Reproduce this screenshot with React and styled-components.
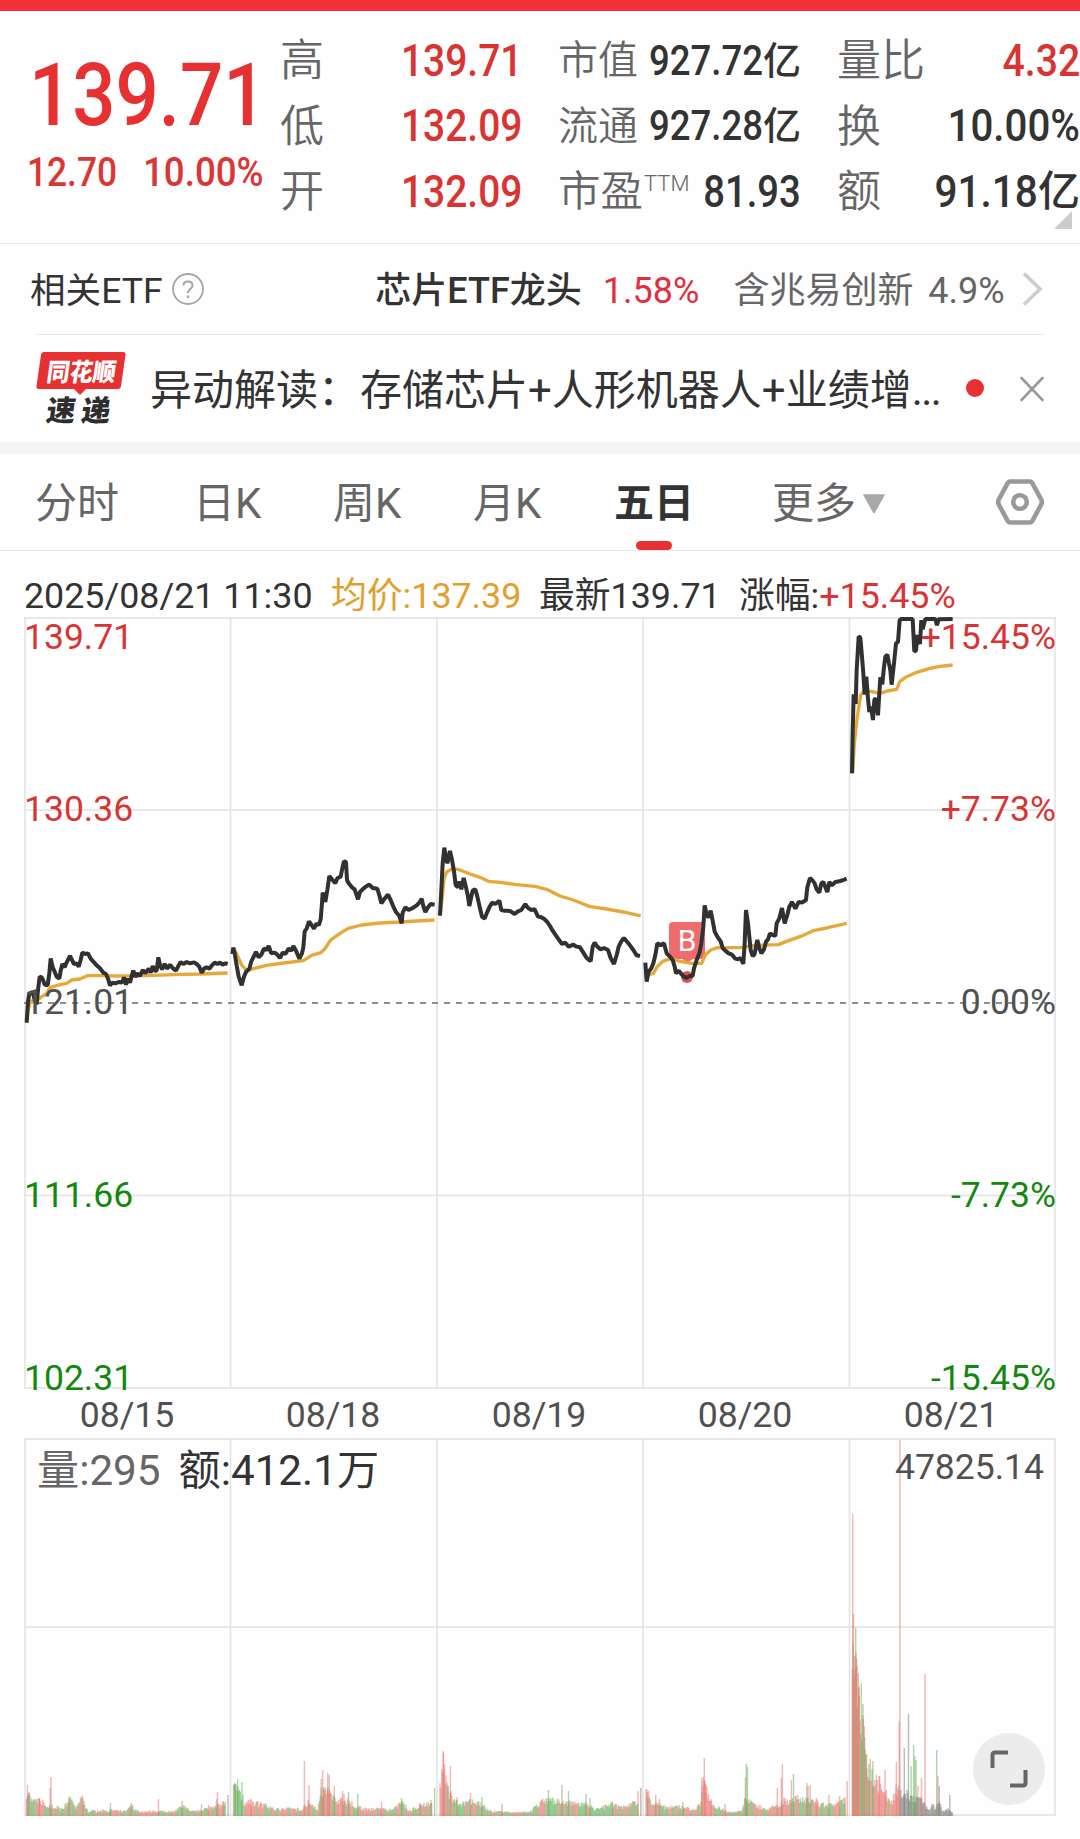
import React from "react";
import styled, { createGlobalStyle } from "styled-components";

const INK = "#333333";
const GREY = "#666666";
const RED = "#d93434";
const GREEN = "#12880f";
const LINE = "#e8e8e8";

const Global = createGlobalStyle`
  * { box-sizing: border-box; }
  body {
    margin: 0;
    background: #fefefe;
    color: ${INK};
    font-family: Roboto, "Noto Sans CJK SC", sans-serif;
    -webkit-font-smoothing: antialiased;
  }
`;

const Page = styled.main`
  width: 1080px;
  height: 1839px;
  overflow: hidden;
  display: flex;
  flex-direction: column;
`;

const TopBar = styled.div`
  height: 11px;
  flex: none;
  background: #f33038;
`;

/* ---------- quote ---------- */

const Quote = styled.section`
  position: relative;
  height: 233px;
  flex: none;
  padding-top: 17px;
  border-bottom: 1px solid ${LINE};
  display: grid;
  grid-template-columns: 280px 244px 242px 243px;
  column-gap: 0;
  justify-content: start;
`;

const Fit = styled.span`
  display: inline-block;
  white-space: nowrap;
  transform: scaleX(${(p) => p.$sx || 0.86});
  transform-origin: ${(p) => p.$from || "left"} center;
  margin-left: ${(p) => (p.$from === "right" ? -20 : 0)}px;
`;

const PriceBlock = styled.div`
  display: flex;
  flex-direction: column;
  padding-left: 29px;
  color: #e73032;
`;

const Price = styled.div`
  height: 94px;
  margin-top: 20px;
  font-size: 87px;
  line-height: 94px;
  font-weight: 550;
`;

const Change = styled.div`
  display: flex;
  margin-top: 6px;
  font-size: 41px;
  line-height: 48px;
  font-weight: 500;
  color: #d93636;
  span:first-child { width: 116px; }
  margin-left: -2px;
`;

const StatColumn = styled.div`
  display: flex;
  flex-direction: column;
  margin-left: ${(p) => p.$shift || 0}px;
  width: ${(p) => p.$w}px;
`;

const Stat = styled.div`
  height: 65.5px;
  display: flex;
  align-items: center;
  justify-content: space-between;
  white-space: nowrap;
`;

const Label = styled.span`
  font-size: ${(p) => p.$size || 44}px;
  line-height: 60px;
  font-weight: 350;
  color: ${GREY};
  display: flex;
  padding-top: 1px;
`;

const Sup = styled.sup`
  font-size: 22px;
  line-height: 23px;
  font-weight: 300;
  margin: 10px 0 0 1px;
`;

const Value = styled.span`
  display: flex;
  align-items: center;
  font-size: ${(p) => p.$size || 45}px;
  line-height: 60px;
  font-weight: 500;
  color: ${(p) => (p.$red ? RED : INK)};
  width: ${(p) => (p.$w ? p.$w + "px" : "auto")};
  justify-content: ${(p) => (p.$left ? "flex-start" : "flex-end")};
`;

const Unit = styled.span`
  font-size: ${(p) => p.$size || 40}px;
  font-weight: 500;
`;

const Corner = styled.svg`
  position: absolute;
  right: 8px;
  top: 200px;
`;

/* ---------- ETF ---------- */

const EtfRow = styled.section`
  height: 91px;
  flex: none;
  margin: 0 36px;
  border-bottom: 1px solid ${LINE};
  display: flex;
  align-items: center;
  font-size: 36px;
  line-height: 48px;
  white-space: nowrap;
`;

const EtfTitle = styled.div`
  display: flex;
  align-items: center;
  gap: 8px;
  width: 346px;
  margin-left: -6px;
  font-size: 35.6px;
`;

const EtfText = styled.span`
  width: ${(p) => p.$w}px;
  padding-top: 3px;
  font-weight: ${(p) => (p.$bold ? 500 : 400)};
  color: ${(p) => p.$color || INK};
`;

/* ---------- news ---------- */

const NewsRow = styled.section`
  height: 107px;
  flex: none;
  padding: 0 36px;
  display: flex;
  align-items: center;
`;

const Logo = styled.svg`
  flex: none;
  margin-top: -2px;
  overflow: visible;
`;

const Headline = styled.span`
  width: 816px;
  margin-left: 22px;
  padding-top: 4px;
  font-size: 42px;
  line-height: 60px;
  white-space: nowrap;
`;

const Ellipsis = styled.span`
  letter-spacing: -1.5px;
`;

const Dot = styled.i`
  width: 18px;
  height: 18px;
  border-radius: 50%;
  background: #e73032;
  margin: -1px 36px 0 0;
  flex: none;
`;

const Band = styled.div`
  height: 12px;
  flex: none;
  background: #f4f4f4;
`;

/* ---------- tabs ---------- */

const Tabs = styled.nav`
  height: 97px;
  flex: none;
  border-bottom: 1px solid ${LINE};
  display: flex;
  align-items: stretch;
  padding: 0 35px;
`;

const Tab = styled.div`
  display: flex;
  flex-direction: column;
  align-items: flex-start;
  justify-content: space-between;
  width: ${(p) => p.$w}px;
  padding-top: 20px;
  font-size: ${(p) => (p.$active ? 40 : 42)}px;
  line-height: 60px;
  color: ${(p) => (p.$active ? INK : GREY)};
  font-weight: ${(p) => (p.$active ? 700 : 400)};
  white-space: nowrap;
`;

const TabText = styled.span`
  display: flex;
  align-items: center;
  gap: 6px;
`;

const Underline = styled.i`
  width: 36px;
  height: 9px;
  margin-left: 22px;
  border-radius: 5px;
  background: #e73032;
`;

const SettingsIcon = styled.svg`
  align-self: center;
`;

/* ---------- chart ---------- */

const Legend = styled.div`
  height: 66px;
  flex: none;
  display: flex;
  padding: 20px 0 0 24px;
  font-size: 35.8px;
  line-height: 50px;
  white-space: nowrap;
`;

const LegendItem = styled.span`
  width: ${(p) => p.$w}px;
  color: ${(p) => p.$color || INK};
`;

const Accent = styled.span`
  color: ${RED};
`;

const Panel = styled.section`
  position: relative;
  height: ${(p) => p.$h}px;
  flex: none;
  svg { display: block; }
`;

const Axis = styled.span`
  position: absolute;
  top: ${(p) => p.$y}px;
  ${(p) => (p.$right ? "right: 24px;" : "left: 24px;")}
  font-size: 35.5px;
  line-height: 40px;
  color: ${(p) => p.$color};
`;

const Dates = styled.div`
  height: 49px;
  flex: none;
  display: grid;
  grid-template-columns: repeat(5, 206px);
  padding-left: 24px;
  text-align: center;
  font-size: 35.6px;
  line-height: 52px;
  color: #505050;
`;

const VolumeLegend = styled.div`
  position: absolute;
  left: 37px;
  top: 8px;
  display: flex;
  gap: 18px;
  font-size: 42.2px;
  line-height: 50px;
`;

const VolumeText = styled.span`
  color: ${(p) => (p.$dim ? GREY : INK)};
`;

const VolumeMax = styled.span`
  position: absolute;
  right: 36px;
  top: 9px;
  font-size: 35.5px;
  line-height: 40px;
  color: #505050;
`;

const Expand = styled.button`
  position: absolute;
  left: 973px;
  top: 295px;
  width: 72px;
  height: 72px;
  border: 0;
  padding: 0;
  border-radius: 50%;
  background: #ececec;
  display: grid;
  place-items: center;
`;

/* Points are stored in thirds of a pixel; dx, dy shift a session on the canvas. */
const SESSIONS = [
  {
    dx: 0, dy: 0,
    price: "80,1388 84,1325 88,1300 98,1296 104,1320 110,1333 114,1290 119,1250 125,1252 130,1262 134,1274 143,1276 148,1240 152,1195 158,1222 164,1235 170,1250 178,1256 182,1232 187,1212 194,1222 200,1207 210,1188 216,1200 222,1212 230,1210 236,1220 242,1200 247,1178 256,1182 264,1180 272,1196 280,1205 290,1216 300,1225 310,1238 318,1242 324,1256 330,1276 338,1268 346,1270 356,1266 366,1268 372,1252 378,1274 384,1256 390,1268 396,1244 400,1232 406,1250 414,1240 420,1248 428,1230 436,1240 446,1226 452,1238 458,1218 464,1232 470,1232 475,1192 480,1215 486,1228 494,1212 502,1226 510,1214 520,1226 528,1232 536,1216 542,1206 550,1212 560,1206 570,1210 582,1207 590,1212 598,1220 605,1238 612,1226 620,1222 628,1226 636,1216 644,1208 652,1212 660,1208 668,1214 676,1210 683,1212",
    avg: "80,1388 84,1350 92,1322 104,1328 120,1314 140,1300 150,1283 175,1275 200,1270 215,1260 240,1257 262,1247 310,1247 350,1248 440,1247 520,1244 600,1242 683,1239",
  },
  {
    dx: 0, dy: 0,
    price: "697,1182 700,1163 704,1180 710,1216 716,1250 725,1276 732,1250 738,1236 748,1226 754,1204 760,1192 768,1176 776,1192 784,1184 792,1166 800,1170 806,1158 814,1180 824,1178 832,1184 840,1194 848,1178 856,1182 866,1166 874,1172 880,1158 888,1172 898,1196 906,1180 910,1162 914,1114 920,1106 927,1084 934,1094 942,1106 950,1090 956,1096 962,1078 966,1030 968,998 976,1026 982,990 988,948 996,958 1006,970 1012,955 1022,950 1028,920 1032,904 1038,906 1041,960 1046,970 1056,982 1064,988 1074,1018 1080,996 1090,986 1100,978 1108,974 1118,984 1132,986 1138,1006 1144,1030 1152,1018 1164,1004 1172,1020 1180,1040 1188,1056 1198,1068 1205,1090 1208,1058 1216,1042 1226,1050 1238,1044 1250,1036 1258,1028 1265,1016 1270,1038 1276,1056 1284,1042 1292,1032 1304,1034",
    avg: "700,1163 712,1186 725,1215 740,1232 760,1226 800,1216 850,1209 910,1202 935,1186 962,1178 975,1166 992,1140 1020,1120 1045,1105 1085,1095 1140,1089 1200,1086 1250,1083 1304,1080",
  },
  {
    dx: 1260, dy: 720,
    price: "60,347 64,270 68,190 73,143 78,175 82,190 90,153 96,180 102,214 107,255 114,262 118,244 124,268 131,234 138,262 144,290 148,318 154,290 158,272 166,268 172,290 180,325 186,350 194,356 200,340 208,322 216,308 226,312 238,302 244,330 252,332 262,332 272,334 284,342 294,334 304,330 316,312 324,324 334,330 344,328 354,350 364,352 374,358 382,366 390,378 398,392 406,404 416,418 426,432 436,428 446,440 460,434 470,440 480,442 490,458 500,474 512,484 518,440 524,428 532,440 542,448 552,444 564,450 572,474 582,492 590,465 596,440 604,424 612,414 620,424 630,436 640,450 650,466 660,468",
    avg: "60,347 66,300 72,235 80,216 100,205 120,210 150,222 180,232 205,244 240,247 290,254 345,259 380,268 420,288 460,300 510,320 560,327 610,336 662,348",
  },
  {
    dx: 1260, dy: 720,
    price: "676,488 680,545 686,515 694,505 700,490 706,465 712,430 722,436 732,430 740,460 750,470 758,480 764,500 768,520 776,512 784,522 792,530 800,534 808,528 818,528 822,505 830,480 838,460 844,430 850,380 854,316 860,345 866,352 872,332 878,362 884,395 892,410 902,424 908,444 916,452 926,460 936,464 946,476 954,478 962,474 970,492 974,430 978,330 984,370 988,410 992,450 998,468 1004,462 1008,440 1012,420 1018,445 1024,460 1032,448 1038,425 1044,418 1050,400 1058,405 1066,408 1070,370 1078,355 1086,324 1094,370 1102,345 1108,320 1116,306 1126,326 1136,306 1146,308 1158,300 1162,262 1170,234 1178,242 1184,250 1190,268 1198,278 1204,250 1210,246 1222,276 1228,246 1236,256 1246,246 1258,244 1270,240 1280,236",
    avg: "684,525 700,520 712,500 728,484 752,476 780,484 815,490 845,490 856,465 872,450 892,443 965,443 1000,436 1075,434 1100,424 1150,406 1180,392 1220,384 1280,370",
  },
  {
    dx: 2100, dy: 0,
    price: "456,640 458,520 461,403 467,432 470,330 476,230 481,232 486,290 490,340 494,404 499,350 504,415 508,456 513,440 519,480 523,420 527,415 534,466 538,400 541,352 547,373 551,330 556,290 562,284 567,310 571,330 575,374 582,310 588,250 594,246 599,180 603,177 638,177 643,274 648,272 652,225 656,240 660,252 664,180 668,208 676,177 706,177 711,196 716,178 758,177",
    avg: "458,640 463,550 472,470 482,405 492,392 512,394 540,400 562,393 590,388 600,364 620,350 650,337 690,325 720,319 758,315",
  },
];

/* Volume: env holds [x, height] knots, peaks hold [x, height, colour], tone is the share of rising minutes. */
const VOLUMES = [
  {
    from: 26.5, to: 226, tone: 0.5,
    env: [[26, 22], [29, 18], [33, 12], [43, 13], [48, 7], [54, 9], [60, 6], [66, 9], [70, 16], [75, 6], [82, 15], [88, 4], [110, 5], [125, 4], [132, 8], [138, 4], [175, 4], [183, 9], [190, 4], [200, 5], [210, 7], [226, 11]],
    peaks: [[27.5, 31, "r"], [29, 24, "r"], [39.5, 18, "r"], [50.2, 28, "r"], [51, 39, "r"], [69, 19, "r"], [82.8, 18, "r"], [110.5, 13, "g"], [131, 13, "g"], [158.5, 17, "r"], [182, 15, "r"], [201.5, 12, "g"], [208.5, 11, "r"], [216.5, 17, "r"], [217.5, 24, "r"], [223.5, 15, "r"], [228, 21, "k"]],
  },
  {
    from: 244, to: 432, tone: 0.6,
    env: [[244, 12], [262, 10], [275, 6], [300, 6], [302, 5], [306, 11], [310, 12], [314, 8], [318, 6], [321, 20], [330, 22], [335, 14], [350, 12], [362, 6], [380, 6], [390, 5], [402, 11], [410, 5], [424, 10], [432, 12]],
    peaks: [[251, 17, "r"], [304.4, 55, "r"], [309, 31, "r"], [321.2, 37, "r"], [322.7, 46, "r"], [323.6, 29, "g"], [327.8, 43, "r"], [329.3, 41, "r"], [334.3, 30, "r"], [342.6, 25, "r"], [344, 22, "r"], [348.5, 24, "g"], [357.8, 22, "g"], [381.5, 14, "r"], [401.5, 18, "g"], [420, 13, "r"], [431, 16, "g"], [434.6, 28, "g"]],
  },
  {
    from: 233.5, to: 243.5, tone: 0.05,
    env: [[233, 28], [238, 30], [239.5, 22], [241, 15], [243.5, 18]],
    peaks: [[235, 33, "g"], [237.6, 37, "g"], [242, 34, "g"]],
  },
  {
    from: 440, to: 447, tone: 1,
    env: [[440, 28], [443, 46], [447, 24]],
    peaks: [[443.2, 65, "r"], [444.5, 52, "r"], [450.4, 50, "r"]],
  },
  {
    from: 447.5, to: 638.5, tone: 0.44,
    env: [[447, 24], [452, 17], [460, 11], [475, 12], [484, 8], [492, 4], [515, 3], [530, 4], [540, 11], [549, 14], [556, 12], [570, 11], [590, 10], [594, 5], [612, 10], [620, 7], [636, 12]],
    peaks: [[457, 19, "r"], [470.5, 23, "r"], [482, 19, "g"], [502, 12, "g"], [548.5, 26, "g"], [562, 31, "g"], [568.5, 25, "g"], [586, 22, "g"], [590, 18, "g"], [612.5, 14, "g"], [638, 25, "r"], [640.8, 28, "k"]],
  },
  {
    from: 646, to: 845, tone: 0.58,
    env: [[646, 22], [652, 12], [668, 7], [680, 8], [695, 5], [700, 10], [704, 30], [710, 13], [715, 8], [730, 3], [742, 4], [746, 18], [750, 11], [765, 6], [775, 8], [785, 13], [800, 15], [812, 13], [825, 9], [845, 13]],
    peaks: [[647.5, 24, "r"], [655.7, 21, "r"], [659.5, 17, "r"], [683, 14, "g"], [701.8, 38, "r"], [704.3, 58, "r"], [705.8, 32, "r"], [711, 15, "r"], [725, 12, "r"], [745.4, 38, "r"], [746.3, 52, "g"], [747.5, 49, "g"], [777.3, 28, "r"], [781.4, 38, "r"], [782.4, 52, "r"], [791.4, 36, "r"], [793.5, 42, "g"], [806.9, 33, "r"], [808, 30, "g"], [810.2, 31, "r"], [816.5, 18, "r"], [829, 21, "r"], [839.6, 20, "r"], [845, 19, "r"], [847.2, 35, "r"]],
  },
  {
    from: 852.3, to: 901, tone: 0.65,
    env: [[852, 140], [857, 135], [859, 96], [861, 90], [863, 74], [866, 50], [870, 40], [875, 30], [880, 28], [885, 20], [892, 12], [896, 24], [901, 22]],
    peaks: [[852.7, 302, "r"], [853.5, 202, "r"], [854.7, 160, "r"], [856, 163, "r"], [857, 150, "r"], [858.5, 128, "r"], [859.3, 120, "r"], [861.3, 133, "g"], [863, 112, "g"], [864.6, 79, "g"], [866.5, 62, "g"], [869, 52, "g"], [872.9, 55, "g"], [879, 40, "r"], [885, 46, "r"], [896.4, 54, "r"], [899.2, 95, "r"], [899.9, 376, "r"]],
  },
  {
    from: 901, to: 953, tone: -1,
    env: [[901, 18], [905, 22], [912, 16], [918, 16], [925, 10], [929, 4], [933, 12], [935, 5], [939, 14], [943, 4], [949, 6], [951, 3], [953, 2]],
    peaks: [[904.3, 68, "k"], [908.5, 102, "k"], [911.2, 50, "g"], [913.6, 71, "g"], [914.8, 60, "g"], [916, 56, "g"], [917.8, 30, "r"], [921.5, 38, "r"], [925, 142, "r"], [936.7, 66, "g"], [937.9, 40, "r"], [939.2, 30, "k"], [949.8, 21, "k"]],
  },
];

const TINT = { r: "#e8706a", g: "#5fb058", k: "#777777" };

function heightAt(env, x) {
  for (let i = 1; i < env.length; i += 1) {
    const [x1, h1] = env[i];
    const [x0, h0] = env[i - 1];
    if (x <= x1) return h0 + ((h1 - h0) * (x - x0)) / (x1 - x0);
  }
  return env[env.length - 1][1];
}

function buildBars() {
  const bars = [];
  let seed = 7;
  const rnd = () => {
    seed = (seed * 16807) % 2147483647;
    return seed / 2147483647;
  };
  VOLUMES.forEach((v) => {
    let tint = "r";
    for (let x = v.from; x <= v.to; x += 0.857) {
      const h = heightAt(v.env, x) * (0.8 + rnd() * 0.65);
      if (v.tone < 0) tint = "k";
      else if (rnd() < 0.6) tint = rnd() < v.tone ? "r" : "g";
      bars.push([x, Math.max(3.5, h), tint]);
    }
    v.peaks.forEach((p) => bars.push(p));
  });
  return bars;
}

const BARS = buildBars();
const COLUMNS = [25, 230.5, 437, 643, 849.5, 1055];

function PriceChart() {
  return (
    <svg width="1080" height="772" viewBox="0 0 1080 772">
      <g stroke={LINE} strokeWidth="2">
        {[1, 193, 578.5, 771].map((y) => <path key={y} d={`M24 ${y}H1056`} />)}
      </g>
      <g stroke="#e4e4e4" strokeWidth="1.6">
        {COLUMNS.map((x) => <path key={x} d={`M${x} 0V772`} />)}
      </g>
      <path d="M24 386H1056" stroke="#8f8f8f" strokeWidth="1.8" strokeDasharray="6 6" />
      <g fill="#ee6b6e">
        <rect x="669" y="305" width="36" height="37" rx="4" />
        <path d="M681 341H694L687.5 346Z" />
        <circle cx="687" cy="360" r="6" fill="#dc5356" />
      </g>
      <text x="687" y="334" textAnchor="middle" fill="#fff" fontSize="30" fontFamily="Roboto, sans-serif">B</text>
      <g transform="translate(0 -57) scale(.33333)" fill="none" strokeLinejoin="bevel">
        {SESSIONS.map((s, i) => (
          <g key={i} transform={`translate(${s.dx} ${s.dy})`}>
            <polyline points={s.avg} stroke="#e5a93a" strokeWidth="10" />
            <polyline points={s.price} stroke="#313131" strokeWidth="12" />
          </g>
        ))}
      </g>
    </svg>
  );
}

function VolumeChart() {
  return (
    <svg width="1080" height="378" viewBox="0 0 1080 378">
      <g stroke={LINE} strokeWidth="2">
        {[1, 189, 377].map((y) => <path key={y} d={`M24 ${y}H1056`} />)}
      </g>
      <g stroke="#e4e4e4" strokeWidth="1.6">
        {COLUMNS.map((x) => <path key={x} d={`M${x} 0V378`} />)}
      </g>
      <g fillOpacity=".5">
        {BARS.map(([x, h, c], i) => (
          <rect key={i} x={x - 0.7} y={378 - h} width="1.4" height={h} fill={TINT[c]} />
        ))}
      </g>
    </svg>
  );
}

function BrandLogo() {
  return (
    <Logo width="92" height="74" viewBox="0 0 92 74">
      <path d="M8 1H87Q90 1 89.500 4L85 35Q84.500 38 82 38H50L44 44L38 38H3Q0 38 .5 35L5 4Q5.500 1 8 1Z" fill="#e73032" />
      <g transform="skewX(-8)" fontFamily="'Noto Sans CJK SC', sans-serif" fontWeight="900">
        <text x="14" y="30" fontSize="25" textLength="69" lengthAdjust="spacingAndGlyphs" fill="#fff">同花顺</text>
        <text x="19" y="70" fontSize="29" fill="#2e2e2e">速</text>
        <text x="54" y="70" fontSize="29" fill="#2e2e2e">递</text>
      </g>
    </Logo>
  );
}

const AXIS = [
  ["139.71", "+15.45%", 0, RED],
  ["130.36", "+7.73%", 172, RED],
  ["121.01", "0.00%", 365, "#505050"],
  ["111.66", "-7.73%", 558, GREEN],
  ["102.31", "-15.45%", 741, GREEN],
];

export default function App() {
  return (
    <Page>
      <Global />
      <TopBar />

      <Quote>
        <PriceBlock>
          <Price><Fit $sx={0.875}>139.71</Fit></Price>
          <Change>
            <Fit $sx={0.86}>12.70</Fit>
            <Fit $sx={0.895}>10.00%</Fit>
          </Change>
        </PriceBlock>
        <StatColumn $w={244}>
          {[["高", "139.71"], ["低", "132.09"], ["开", "132.09"]].map(([k, v]) => (
            <Stat key={k}>
              <Label>{k}</Label>
              <Value $red $left $w={123}><Fit $sx={0.865}>{v}</Fit></Value>
            </Stat>
          ))}
        </StatColumn>
        <StatColumn $w={243} $shift={34}>
          <Stat>
            <Label $size={40}>市值</Label>
            <Value $size={42}><Fit $from="right" $sx={0.87}>927.72</Fit><Unit $size={38}>亿</Unit></Value>
          </Stat>
          <Stat>
            <Label $size={40}>流通</Label>
            <Value $size={42}><Fit $from="right" $sx={0.87}>927.28</Fit><Unit $size={38}>亿</Unit></Value>
          </Stat>
          <Stat>
            <Label $size={42.5}>市盈<Sup>TTM</Sup></Label>
            <Value><Fit $from="right" $sx={0.85}>81.93</Fit></Value>
          </Stat>
        </StatColumn>
        <StatColumn $w={243} $shift={71}>
          <Stat>
            <Label>量比</Label>
            <Value $red><Fit $from="right" $sx={0.87}>4.32</Fit></Value>
          </Stat>
          <Stat>
            <Label>换</Label>
            <Value><Fit $from="right" $sx={0.895}>10.00%</Fit></Value>
          </Stat>
          <Stat>
            <Label>额</Label>
            <Value><Fit $from="right" $sx={0.9}>91.18</Fit><Unit $size={42}>亿</Unit></Value>
          </Stat>
        </StatColumn>
        <Corner width="18" height="18"><path d="M18 0V18H0Z" fill="#cccccc" /></Corner>
      </Quote>

      <EtfRow>
        <EtfTitle>
          <EtfText>相关ETF</EtfText>
          <svg width="34" height="34" viewBox="0 0 34 34" fill="none" stroke="#a6a6a6" strokeWidth="1.8">
            <circle cx="17" cy="17" r="15" />
            <path d="M12.500 13.500Q12.500 9.500 17 9.500T21.500 13.500Q21.500 15.500 19 17.200Q17 18.700 17 21" strokeWidth="2" />
            <path d="M17 23.500V26" strokeWidth="2.4" />
          </svg>
        </EtfTitle>
        <EtfText $w={228} $bold>芯片ETF龙头</EtfText>
        <EtfText $w={131} $color="#e0303f">1.58%</EtfText>
        <EtfText $w={195} $color={GREY}>含兆易创新</EtfText>
        <EtfText $w={94} $color={GREY}>4.9%</EtfText>
        <svg width="22" height="36" viewBox="0 0 22 36" style={{ flex: "none" }}>
          <path d="M2 2.500L18 18L2 33.500" fill="none" stroke="#cdcdcd" strokeWidth="3.6" />
        </svg>
      </EtfRow>

      <NewsRow>
        <BrandLogo />
        <Headline>异动解读：存储芯片+人形机器人+业绩增<Ellipsis>...</Ellipsis></Headline>
        <Dot />
        <svg width="24" height="26" viewBox="0 0 24 26">
          <path d="M1.500 2L22.500 24M22.500 2L1.500 24" stroke="#999" strokeWidth="2.6" strokeLinecap="round" />
        </svg>
      </NewsRow>
      <Band />

      <Tabs>
        <Tab $w={158}>分时</Tab>
        <Tab $w={140}>日K</Tab>
        <Tab $w={140}>周K</Tab>
        <Tab $w={141}>月K</Tab>
        <Tab $w={158} $active>五日<Underline /></Tab>
        <Tab $w={223}>
          <TabText>
            更多
            <svg width="24" height="20" viewBox="0 0 24 20"><path d="M2 1H22L12.500 18Q12 19 11.500 18Z" fill="#a8a8a8" stroke="#a8a8a8" strokeWidth="1.500" strokeLinejoin="round" /></svg>
          </TabText>
        </Tab>
        <SettingsIcon width="50" height="48" viewBox="0 0 50 48" fill="none" stroke="#999" strokeWidth="4.600">
          <path d="M15.500 3.500H34.500Q36.500 3.500 37.500 5.300L46.200 21.500Q47.500 24 46.200 26.500L37.500 42.700Q36.500 44.500 34.500 44.500H15.500Q13.500 44.500 12.500 42.700L3.800 26.500Q2.500 24 3.800 21.500L12.500 5.300Q13.500 3.500 15.500 3.500Z" />
          <circle cx="25" cy="24" r="6.800" />
        </SettingsIcon>
      </Tabs>

      <Legend>
        <LegendItem $w={307}>2025/08/21 11:30</LegendItem>
        <LegendItem $w={208} $color="#dfa02c">均价:137.39</LegendItem>
        <LegendItem $w={200}>最新139.71</LegendItem>
        <LegendItem $w={240}>涨幅:<Accent>+15.45%</Accent></LegendItem>
      </Legend>

      <Panel $h={772}>
        <PriceChart />
        {AXIS.map(([price, pct, y, color]) => (
          <React.Fragment key={price}>
            <Axis $y={y} $color={color}>{price}</Axis>
            <Axis $y={y} $color={color} $right>{pct}</Axis>
          </React.Fragment>
        ))}
      </Panel>

      <Dates>
        {["08/15", "08/18", "08/19", "08/20", "08/21"].map((d) => <span key={d}>{d}</span>)}
      </Dates>

      <Panel $h={378}>
        <VolumeChart />
        <VolumeLegend>
          <VolumeText $dim>量:295</VolumeText>
          <VolumeText>额:412.1万</VolumeText>
        </VolumeLegend>
        <VolumeMax>47825.14</VolumeMax>
        <Expand aria-label="expand">
          <svg width="38" height="38" viewBox="0 0 38 38" fill="none" stroke="#666" strokeWidth="4">
            <path d="M2.500 18V5Q2.500 2.500 5 2.500H18M20 35.500H33Q35.500 35.500 35.500 33V20" />
          </svg>
        </Expand>
      </Panel>
    </Page>
  );
}
